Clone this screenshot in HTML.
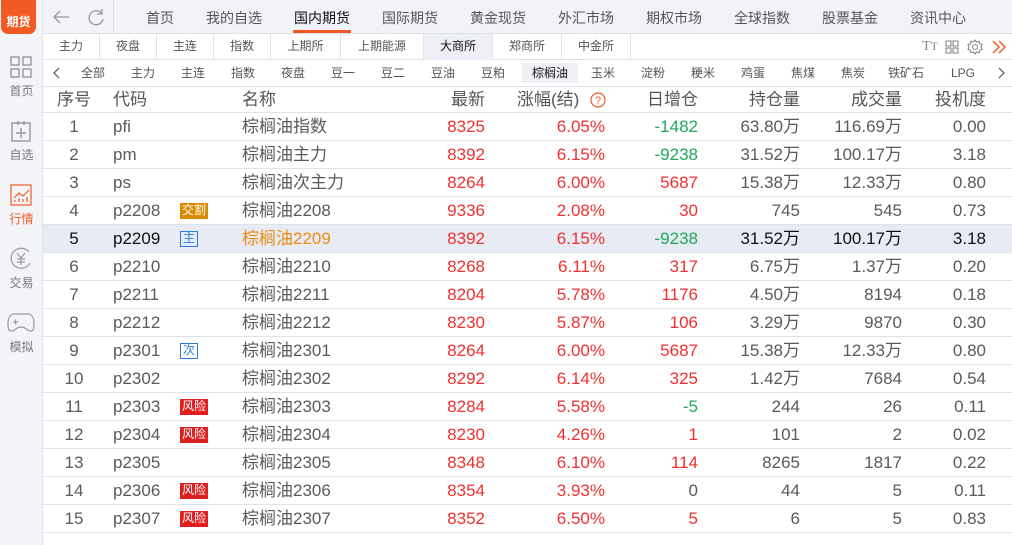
<!DOCTYPE html><html><head><meta charset="utf-8"><style>
*{margin:0;padding:0;box-sizing:border-box}
body{width:1012px;height:545px;overflow:hidden;background:#fff;font-family:"Liberation Sans","Noto Sans CJK SC",sans-serif;color:#5a5a5a;position:relative}
.sb{position:absolute;left:0;top:0;width:43px;height:545px;background:#f3f4f8;border-right:1px solid #e0e3ea}
.logo{position:absolute;left:1px;top:0;width:35px;height:34px;background:#f25a24;border-radius:0 0 7px 7px;color:#fff;font-size:12px;font-weight:bold;text-align:center;line-height:44px}
.si{position:absolute;left:0;width:43px;text-align:center;font-size:12px;color:#777}
.top{position:absolute;left:43px;top:0;width:969px;height:34px;background:#f2f3f8;border-bottom:1px solid #dde1ea}
.top span{position:absolute;top:8px;font-size:14px;color:#555}
.r2{position:absolute;left:43px;top:34px;width:969px;height:26px;border-bottom:1px solid #dde1ea}
.r2 span{position:absolute;top:0;height:26px;line-height:25px;font-size:12px;color:#555;text-align:center;border-right:1px solid #e0e3ea}
.r3{position:absolute;left:43px;top:60px;width:969px;height:26px}
.r3 span{position:absolute;top:3px;height:20px;line-height:20px;font-size:12px;color:#555;text-align:center}
.hd{position:absolute;left:43px;top:86px;width:969px;height:27px;border-top:1px solid #dde1ea;border-bottom:1px solid #dde1ea}
.row{position:absolute;left:43px;width:969px;height:28px;border-bottom:1px solid #dde1ea;font-size:17px;line-height:28px}
.c{position:absolute;top:0;white-space:nowrap}
.hd .c{line-height:25px;font-size:17px;color:#555}
.n{left:0;width:62px;text-align:center}
.cd{left:70px}
.tg{left:137px;top:6px;font-size:12px;line-height:15px;height:16px;padding:0 2px}
.nm{left:199px}
.p{right:527px;text-align:right}
.z{right:407px;text-align:right}
.d{right:314px;text-align:right}
.o{right:212px;text-align:right}
.v{right:110px;text-align:right}
.t{right:26px;text-align:right}
.r{color:#f03030}.g{color:#1fa85a}
.sel{background:#e6ebf4;color:#111}
.sel .nm{color:#f08a10}
.tj{background:#d98a00;color:#fff}
.tz{border:1px solid #2a7be0;color:#2a7be0;line-height:13px}
.tf{background:#e02020;color:#fff}
</style></head><body>
<div class="sb">
<div class="logo">期货</div>
<svg style="position:absolute;left:10px;top:56px" width="22" height="22" fill="none" stroke="#888" stroke-width="1.2"><rect x="1" y="1" width="8" height="8"/><rect x="13" y="1" width="8" height="8"/><rect x="1" y="13" width="8" height="8"/><rect x="13" y="13" width="8" height="8"/></svg>
<div class="si" style="top:82px">首页</div>
<svg style="position:absolute;left:11px;top:120px" width="20" height="22" fill="none" stroke="#888" stroke-width="1.2"><rect x="1" y="3" width="18" height="18"/><path d="M7 1v4M13 1v4M10 8v10M5 13h10"/></svg>
<div class="si" style="top:146px">自选</div>
<svg style="position:absolute;left:10px;top:184px" width="22" height="22" fill="none" stroke="#f25a24" stroke-width="1.2"><rect x="1" y="1" width="20" height="20"/><path d="M4 14l5-5 4 3 6-6M5 18v-2M9 18v-4M13 18v-3M17 18v-5"/></svg>
<div class="si" style="top:210px;color:#f25a24">行情</div>
<svg style="position:absolute;left:9px;top:246px" width="24" height="24" fill="none" stroke="#999" stroke-width="1.2"><path d="M20 6A10 10 0 1 0 21 17"/><path d="M8 7l4 5 4-5M12 12v7M8 13h8M8 16h8"/></svg>
<div class="si" style="top:274px">交易</div>
<svg style="position:absolute;left:7px;top:312px" width="28" height="20" fill="none" stroke="#999" stroke-width="1.2"><path d="M7 2h14c4 0 6 4 6 10s-1 7-4 7-4-4-9-4-6 4-9 4-4-1-4-7 2-10 6-10z"/><path d="M6 10h5M8.5 7.5v5M18 9h.5M21 12h.5"/></svg>
<div class="si" style="top:338px">模拟</div>
</div>
<div class="top">
<svg style="position:absolute;left:9px;top:9px" width="18" height="16" fill="none" stroke="#999" stroke-width="1.3"><path d="M17 8H2M8 2L2 8l6 6"/></svg>
<svg style="position:absolute;left:44px;top:8px" width="18" height="18" fill="none" stroke="#999" stroke-width="1.3"><path d="M15 6A7 7 0 1 0 16 11M15 1v5h-5"/></svg>
<div style="position:absolute;left:70px;top:0;height:34px;border-left:1px solid #dde1ea"></div>
<span style="left:103px">首页</span><span style="left:163px">我的自选</span>
<span style="left:251px;color:#111">国内期货</span>
<div style="position:absolute;left:250px;top:30px;width:58px;height:3px;background:#f25a24"></div>
<span style="left:339px">国际期货</span><span style="left:427px">黄金现货</span><span style="left:515px">外汇市场</span><span style="left:603px">期权市场</span><span style="left:691px">全球指数</span><span style="left:779px">股票基金</span><span style="left:867px">资讯中心</span>
</div>
<div class="r2">
<span style="left:0;width:57px">主力</span><span style="left:57px;width:57px">夜盘</span><span style="left:114px;width:57px">主连</span><span style="left:171px;width:57px">指数</span><span style="left:228px;width:70px">上期所</span><span style="left:298px;width:83px">上期能源</span><span style="left:381px;width:69px;background:#eef0f5;color:#111">大商所</span><span style="left:450px;width:69px">郑商所</span><span style="left:519px;width:69px">中金所</span>
<span style="left:878px;width:18px;border:0;font-family:'Liberation Serif',serif;font-size:14px;color:#888">T<small>T</small></span>
<svg style="position:absolute;left:902px;top:6px" width="14" height="14" fill="none" stroke="#888" stroke-width="1.1"><rect x="1" y="1" width="5" height="5"/><rect x="8" y="1" width="5" height="5"/><rect x="1" y="8" width="5" height="5"/><rect x="8" y="8" width="5" height="5"/></svg>
<svg style="position:absolute;left:924px;top:5px" width="16" height="16" fill="none" stroke="#888" stroke-width="1.1"><circle cx="8" cy="8" r="2.5"/><path d="M8 1l1.5 2 2.5-.8.5 2.5 2.5.8-1 2.5 1 2.5-2.5.8-.5 2.5-2.5-.8L8 15l-1.5-2-2.5.8-.5-2.5-2.5-.8 1-2.5-1-2.5 2.5-.8.5-2.5 2.5.8z"/></svg>
<svg style="position:absolute;left:948px;top:6px" width="16" height="14" fill="none" stroke="#f25a24" stroke-width="1.5"><path d="M2 1l6 6-6 6M8 1l6 6-6 6"/></svg>
</div>
<div class="r3">
<svg style="position:absolute;left:9px;top:7px" width="8" height="12" fill="none" stroke="#666" stroke-width="1.3"><path d="M7 1L2 6l5 5"/></svg>
<span style="left:33px;width:34px">全部</span><span style="left:83px;width:34px">主力</span><span style="left:133px;width:34px">主连</span><span style="left:183px;width:34px">指数</span><span style="left:233px;width:34px">夜盘</span><span style="left:283px;width:34px">豆一</span><span style="left:333px;width:34px">豆二</span><span style="left:383px;width:34px">豆油</span><span style="left:433px;width:34px">豆粕</span><span style="left:479px;width:56px;background:#eef0f5;color:#111">棕榈油</span><span style="left:543px;width:34px">玉米</span><span style="left:593px;width:34px">淀粉</span><span style="left:643px;width:34px">粳米</span><span style="left:693px;width:34px">鸡蛋</span><span style="left:743px;width:34px">焦煤</span><span style="left:793px;width:34px">焦炭</span><span style="left:843px;width:40px">铁矿石</span><span style="left:903px;width:34px">LPG</span>
<svg style="position:absolute;left:955px;top:7px" width="8" height="12" fill="none" stroke="#666" stroke-width="1.3"><path d="M1 1l5 5-5 5"/></svg>
</div>
<div class="hd"><span class="c n">序号</span><span class="c cd">代码</span><span class="c nm">名称</span><span class="c p">最新</span><span class="c" style="left:474px">涨幅(结)</span><svg style="position:absolute;left:547px;top:5px" width="16" height="16"><circle cx="8" cy="8" r="7" fill="none" stroke="#f25a24" stroke-width="1.2"/><text x="8" y="12" font-size="11" text-anchor="middle" fill="#f25a24" font-family="Liberation Sans">?</text></svg><span class="c d">日增仓</span><span class="c o">持仓量</span><span class="c v">成交量</span><span class="c t">投机度</span></div>

<div class="row" style="top:113px"><span class="c n">1</span><span class="c cd">pfi</span><span class="c nm">棕榈油指数</span><span class="c p r">8325</span><span class="c z r">6.05%</span><span class="c d g">-1482</span><span class="c o">63.80万</span><span class="c v">116.69万</span><span class="c t">0.00</span></div>
<div class="row" style="top:141px"><span class="c n">2</span><span class="c cd">pm</span><span class="c nm">棕榈油主力</span><span class="c p r">8392</span><span class="c z r">6.15%</span><span class="c d g">-9238</span><span class="c o">31.52万</span><span class="c v">100.17万</span><span class="c t">3.18</span></div>
<div class="row" style="top:169px"><span class="c n">3</span><span class="c cd">ps</span><span class="c nm">棕榈油次主力</span><span class="c p r">8264</span><span class="c z r">6.00%</span><span class="c d r">5687</span><span class="c o">15.38万</span><span class="c v">12.33万</span><span class="c t">0.80</span></div>
<div class="row" style="top:197px"><span class="c n">4</span><span class="c cd">p2208</span><span class="c tg tj">交割</span><span class="c nm">棕榈油2208</span><span class="c p r">9336</span><span class="c z r">2.08%</span><span class="c d r">30</span><span class="c o">745</span><span class="c v">545</span><span class="c t">0.73</span></div>
<div class="row sel" style="top:225px"><span class="c n">5</span><span class="c cd">p2209</span><span class="c tg tz">主</span><span class="c nm">棕榈油2209</span><span class="c p r">8392</span><span class="c z r">6.15%</span><span class="c d g">-9238</span><span class="c o">31.52万</span><span class="c v">100.17万</span><span class="c t">3.18</span></div>
<div class="row" style="top:253px"><span class="c n">6</span><span class="c cd">p2210</span><span class="c nm">棕榈油2210</span><span class="c p r">8268</span><span class="c z r">6.11%</span><span class="c d r">317</span><span class="c o">6.75万</span><span class="c v">1.37万</span><span class="c t">0.20</span></div>
<div class="row" style="top:281px"><span class="c n">7</span><span class="c cd">p2211</span><span class="c nm">棕榈油2211</span><span class="c p r">8204</span><span class="c z r">5.78%</span><span class="c d r">1176</span><span class="c o">4.50万</span><span class="c v">8194</span><span class="c t">0.18</span></div>
<div class="row" style="top:309px"><span class="c n">8</span><span class="c cd">p2212</span><span class="c nm">棕榈油2212</span><span class="c p r">8230</span><span class="c z r">5.87%</span><span class="c d r">106</span><span class="c o">3.29万</span><span class="c v">9870</span><span class="c t">0.30</span></div>
<div class="row" style="top:337px"><span class="c n">9</span><span class="c cd">p2301</span><span class="c tg tz">次</span><span class="c nm">棕榈油2301</span><span class="c p r">8264</span><span class="c z r">6.00%</span><span class="c d r">5687</span><span class="c o">15.38万</span><span class="c v">12.33万</span><span class="c t">0.80</span></div>
<div class="row" style="top:365px"><span class="c n">10</span><span class="c cd">p2302</span><span class="c nm">棕榈油2302</span><span class="c p r">8292</span><span class="c z r">6.14%</span><span class="c d r">325</span><span class="c o">1.42万</span><span class="c v">7684</span><span class="c t">0.54</span></div>
<div class="row" style="top:393px"><span class="c n">11</span><span class="c cd">p2303</span><span class="c tg tf">风险</span><span class="c nm">棕榈油2303</span><span class="c p r">8284</span><span class="c z r">5.58%</span><span class="c d g">-5</span><span class="c o">244</span><span class="c v">26</span><span class="c t">0.11</span></div>
<div class="row" style="top:421px"><span class="c n">12</span><span class="c cd">p2304</span><span class="c tg tf">风险</span><span class="c nm">棕榈油2304</span><span class="c p r">8230</span><span class="c z r">4.26%</span><span class="c d r">1</span><span class="c o">101</span><span class="c v">2</span><span class="c t">0.02</span></div>
<div class="row" style="top:449px"><span class="c n">13</span><span class="c cd">p2305</span><span class="c nm">棕榈油2305</span><span class="c p r">8348</span><span class="c z r">6.10%</span><span class="c d r">114</span><span class="c o">8265</span><span class="c v">1817</span><span class="c t">0.22</span></div>
<div class="row" style="top:477px"><span class="c n">14</span><span class="c cd">p2306</span><span class="c tg tf">风险</span><span class="c nm">棕榈油2306</span><span class="c p r">8354</span><span class="c z r">3.93%</span><span class="c d">0</span><span class="c o">44</span><span class="c v">5</span><span class="c t">0.11</span></div>
<div class="row" style="top:505px"><span class="c n">15</span><span class="c cd">p2307</span><span class="c tg tf">风险</span><span class="c nm">棕榈油2307</span><span class="c p r">8352</span><span class="c z r">6.50%</span><span class="c d r">5</span><span class="c o">6</span><span class="c v">5</span><span class="c t">0.83</span></div>
</body></html>
